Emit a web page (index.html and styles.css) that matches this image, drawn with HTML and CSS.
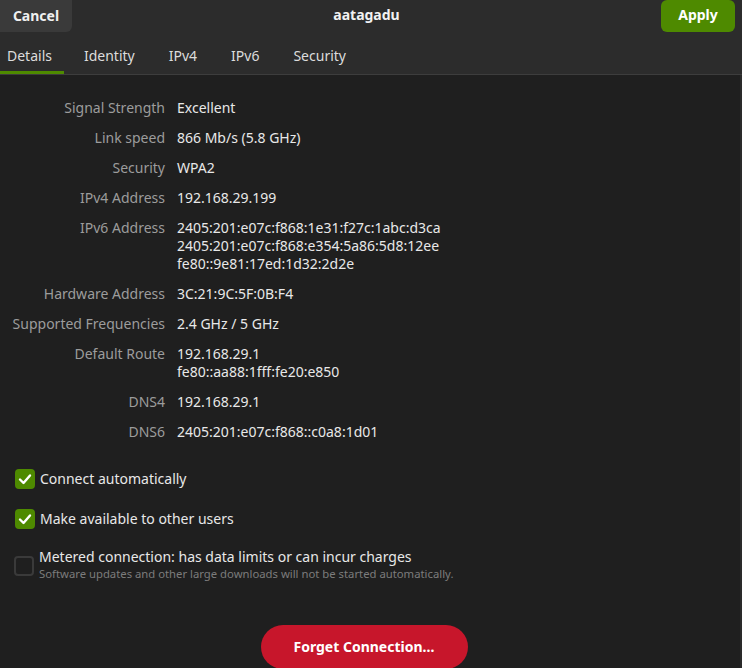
FILE: index.html
```html
<!DOCTYPE html>
<html>
<head>
<meta charset="utf-8">
<link rel="stylesheet" href="styles.css">
</head>
<body>
<div class="window">
  <header class="header">
    <div class="headerbar">
      <button class="btn-cancel">Cancel</button>
      <div class="title">aatagadu</div>
      <button class="btn-apply">Apply</button>
    </div>
    <nav class="tabs">
      <div class="tab active">Details</div>
      <div class="tab">Identity</div>
      <div class="tab">IPv4</div>
      <div class="tab">IPv6</div>
      <div class="tab">Security</div>
    </nav>
  </header>
  <main class="content">
    <div class="details">
      <div class="label">Signal Strength</div><div class="value">Excellent</div>
      <div class="label">Link speed</div><div class="value">866 Mb/s (5.8 GHz)</div>
      <div class="label">Security</div><div class="value">WPA2</div>
      <div class="label">IPv4 Address</div><div class="value">192.168.29.199</div>
      <div class="label">IPv6 Address</div><div class="value">2405:201:e07c:f868:1e31:f27c:1abc:d3ca<br>2405:201:e07c:f868:e354:5a86:5d8:12ee<br>fe80::9e81:17ed:1d32:2d2e</div>
      <div class="label">Hardware Address</div><div class="value">3C:21:9C:5F:0B:F4</div>
      <div class="label">Supported Frequencies</div><div class="value">2.4 GHz / 5 GHz</div>
      <div class="label">Default Route</div><div class="value">192.168.29.1<br>fe80::aa88:1fff:fe20:e850</div>
      <div class="label">DNS4</div><div class="value">192.168.29.1</div>
      <div class="label">DNS6</div><div class="value">2405:201:e07c:f868::c0a8:1d01</div>
    </div>
    <div class="checks">
      <div class="check">
        <span class="box checked"><svg viewBox="0 0 20 20" width="20" height="20"><path d="M5 10.5 L8.5 14 L15 6.5" fill="none" stroke="#fff" stroke-width="2.4" stroke-linecap="round" stroke-linejoin="round"/></svg></span>
        <span class="check-label">Connect automatically</span>
      </div>
      <div class="check">
        <span class="box checked"><svg viewBox="0 0 20 20" width="20" height="20"><path d="M5 10.5 L8.5 14 L15 6.5" fill="none" stroke="#fff" stroke-width="2.4" stroke-linecap="round" stroke-linejoin="round"/></svg></span>
        <span class="check-label">Make available to other users</span>
      </div>
      <div class="check metered">
        <span class="box"></span>
        <div class="check-text">
          <div class="check-label">Metered connection: has data limits or can incur charges</div>
          <div class="check-sub">Software updates and other large downloads will not be started automatically.</div>
        </div>
      </div>
    </div>
    <div class="forget-row">
      <button class="btn-forget">Forget Connection…</button>
    </div>
  </main>
  <div class="edge"></div>
</div>
</body>
</html>
```
FILE: styles.css
```css
* { box-sizing: border-box; }
html, body { margin: 0; padding: 0; }
body {
  width: 742px;
  height: 668px;
  overflow: hidden;
  background: #1f1f1f;
  font-family: "Noto Sans", "DejaVu Sans", sans-serif;
  font-size: 14px;
  color: #e6e6e6;
}
.window { position: relative; width: 742px; height: 668px; display: flex; flex-direction: column; }
.header { background: #2c2c2c; border-bottom: 1px solid #3d3d3d; }
.headerbar { display: flex; align-items: flex-start; height: 32px; }
button { font-family: inherit; border: none; cursor: pointer; }
.btn-cancel {
  width: 72px; height: 32px;
  background: #3a3a3a; color: #f0f0f0;
  font-weight: bold; font-size: 14px;
  border-radius: 0 0 6px 0;
  padding: 0 0 2px 0;
}
.title { flex: 1; text-align: center; font-weight: bold; font-size: 14px; line-height: 30px; color: #f2f2f2; }
.btn-apply {
  width: 74px; height: 32px; margin-right: 7px;
  background: #4e8a00; color: #fff;
  font-weight: bold; font-size: 14px;
  border-radius: 6px;
  padding: 0 0 4px 0;
}
.tabs { display: flex; height: 42px; }
.tab {
  padding: 5px 17px 0 17px;
  line-height: 37px;
  color: #dcdcdc;
  font-size: 14px;
}
.tab:first-child { padding-left: 7px; padding-right: 12px; }
.tab.active { box-shadow: inset 0 -3px 0 #4e8a00; }
.tabs .tab:nth-child(2) { padding-left: 20px; }
.content { flex: 1; display: flex; flex-direction: column; }
.details {
  display: grid;
  grid-template-columns: 165px auto;
  column-gap: 12px;
  padding-top: 18px;
  line-height: 18px;
}
.label, .value { padding: 6px 0; }
.label { text-align: right; color: #9c9c9c; white-space: nowrap; }
.value { color: #e8e8e8; white-space: nowrap; }
.checks { display: flex; flex-direction: column; padding: 12px 0 0 15px; }
.check { display: flex; align-items: center; gap: 5px; height: 40px; }
.box {
  width: 20px; height: 20px; border-radius: 4px;
  display: inline-flex; align-items: center; justify-content: center;
  border: 2px solid #3a3a3a;
  flex: none;
}
.box.checked { background: #4e8a00; border: none; }
.check-label { color: #e8e8e8; font-size: 14px; line-height: 18px; }
.metered { height: auto; margin-top: 9px; }
.metered .box { margin-left: -1px; margin-top: 2px; }
.check-text { display: flex; flex-direction: column; }
.check-sub { color: #7c7c7c; font-size: 11.3px; line-height: 16px; }
.forget-row { display: flex; justify-content: center; padding-top: 43px; padding-right: 14px; }
.btn-forget {
  width: 207px; height: 44px;
  background: #c7162b; color: #fff;
  font-weight: bold; font-size: 14px;
  border-radius: 22px;
  padding-bottom: 2px;
}
.edge { position: absolute; right: 0; top: 75px; width: 2px; height: 593px; background: #2a2a2a; }
```
